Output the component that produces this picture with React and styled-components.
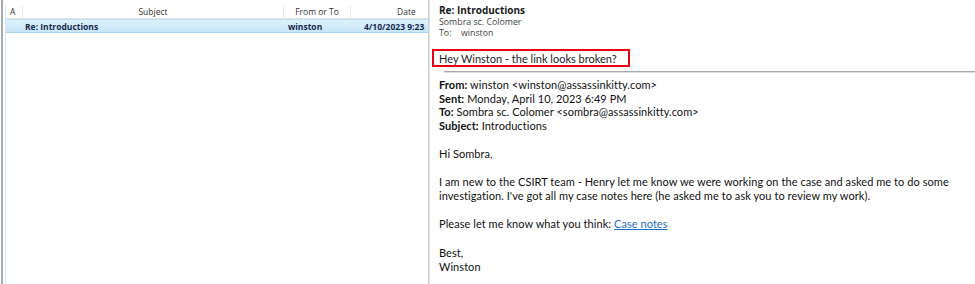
import React from "react";
import styled, { createGlobalStyle } from "styled-components";

const Global = createGlobalStyle`
  html, body { margin: 0; padding: 0; background: #fff; }
  body { width: 975px; height: 284px; overflow: hidden; }
`;

const Page = styled.div`
  display: flex;
  width: 975px;
  height: 284px;
  background: #fff;
  font-family: Lato, "Noto Sans", sans-serif;
`;

const ListPane = styled.div`
  width: 428px;
  height: 100%;
  margin-left: 1px;
  border-left: 2px solid #a9a9a9;
  border-right: 1px solid #cfcfcf;
  padding: 5px 0 0 2px;
  box-sizing: border-box;
  flex-shrink: 0;
  font-family: "Open Sans", "Noto Sans", sans-serif;
`;

const List = styled.div`
  height: 100%;
  border-left: 1px solid #cfe6f7;
`;

const Row = styled.div`
  display: grid;
  grid-template-columns: 17px 261px 67px 1fr;
  height: 14px;
  align-items: center;
  box-sizing: border-box;
  ${(p) =>
    p.$header
      ? `border-bottom: 1px solid #e3e3e3; color: #333;`
      : `background: linear-gradient(#dff1fd, #c7e5f9);
         border-top: 1px solid #bfe0f6;
         border-bottom: 1px solid #a8d3f1;
         color: #15294a;
         font-weight: 700;`}
  font-size: 8.5px;
`;

const Cell = styled.div`
  height: 100%;
  display: flex;
  align-items: center;
  justify-content: ${(p) => p.$align || "flex-start"};
  padding: ${(p) => p.$pad || "0"};
  white-space: nowrap;
  overflow: hidden;
  box-sizing: border-box;
  border-right: ${(p) => (p.$sep ? "1px solid #e6e6e6" : "none")};
`;

const Reader = styled.div`
  flex: 1;
  height: 100%;
  border-left: 1px solid #e2e2e2;
  color: #222;
  min-width: 0;
`;

const Title = styled.div`
  margin: 4px 0 0 9px;
  font-family: "Open Sans", "Noto Sans", sans-serif;
  font-size: 10px;
  line-height: 12px;
  font-weight: 700;
  color: #1a1a1a;
`;

const Meta = styled.div`
  margin-left: 9px;
  font-family: "Open Sans", "Noto Sans", sans-serif;
  font-size: 8.8px;
  line-height: 11px;
  color: #444;
  margin-top: ${(p) => p.$mt || "0"};
`;

const MetaLabel = styled.span`
  display: inline-block;
  width: 22px;
`;

const Highlight = styled.div`
  margin: 10px 0 0 2px;
  width: 198px;
  height: 18px;
  border: 2px solid #e60012;
  box-sizing: border-box;
  padding-left: 5px;
  display: flex;
  align-items: center;
  font-size: 11px;
  color: #222;
`;

const Rule = styled.div`
  margin: 4px 0 0 14px;
  height: 1px;
  background: #a8a8a8;
  border-bottom: 1px solid #dcdcdc;
`;

const Body = styled.div`
  padding: 5px 0 0 9px;
  font-size: 11px;
  letter-spacing: 0.06px;
  line-height: 14.2px;
  color: #111;
`;

const HeadLine = styled.div`
  line-height: 13.7px;
`;

const B = styled.b`
  font-weight: 700;
`;

const P = styled.p`
  margin: 14px 0 0 0;
`;

const Link = styled.a`
  color: #1f6fc6;
  text-decoration: underline;
`;

export default function App() {
  return (
    <>
      <Global />
      <Page>
        <ListPane>
          <List>
            <Row $header>
              <Cell $pad="0 0 0 4px" $sep>A</Cell>
              <Cell $align="center" $sep>Subject</Cell>
              <Cell $align="center" $sep>From or To</Cell>
              <Cell $pad="0 0 0 46px">Date</Cell>
            </Row>
            <Row>
              <Cell />
              <Cell $pad="0 0 0 2px">Re: Introductions</Cell>
              <Cell $pad="0 0 0 4px">winston</Cell>
              <Cell $pad="0 0 0 13px">4/10/2023 9:23</Cell>
            </Row>
          </List>
        </ListPane>
        <Reader>
          <Title>Re: Introductions</Title>
          <Meta $mt="1px">Sombra sc. Colomer</Meta>
          <Meta>
            <MetaLabel>To:</MetaLabel>winston
          </Meta>
          <Highlight>Hey Winston - the link looks broken?</Highlight>
          <Rule />
          <Body>
            <HeadLine><B>From:</B> winston &lt;winston@assassinkitty.com&gt;</HeadLine>
            <HeadLine><B>Sent:</B> Monday, April 10, 2023 6:49 PM</HeadLine>
            <HeadLine><B>To:</B> Sombra sc. Colomer &lt;sombra@assassinkitty.com&gt;</HeadLine>
            <HeadLine><B>Subject:</B> Introductions</HeadLine>
            <P>Hi Sombra,</P>
            <P>
              I am new to the CSIRT team - Henry let me know we were working on the case and asked me to do some
              <br />
              investigation. I've got all my case notes here (he asked me to ask you to review my work).
            </P>
            <P>
              Please let me know what you think: <Link href="#">Case notes</Link>
            </P>
            <P>
              Best,
              <br />
              Winston
            </P>
          </Body>
        </Reader>
      </Page>
    </>
  );
}
